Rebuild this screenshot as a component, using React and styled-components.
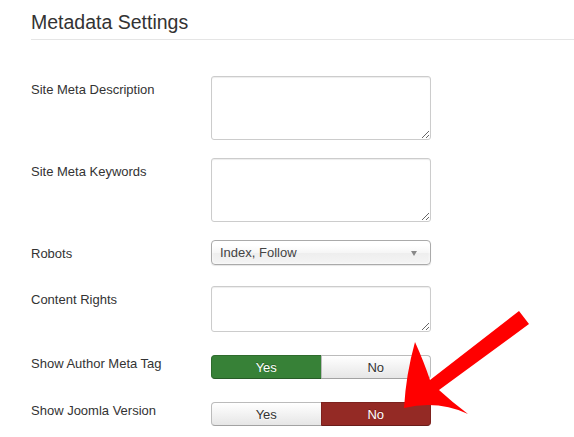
import React from "react";
import styled, { createGlobalStyle } from "styled-components";

const Global = createGlobalStyle`
  html, body { margin: 0; padding: 0; background: #fff; }
  body { font-family: "Liberation Sans", Arial, sans-serif; color: #333; }
  * { box-sizing: border-box; }
`;

const Page = styled.div`
  position: relative;
  width: 574px;
  height: 437px;
  overflow: hidden;
  padding-left: 31px;
`;

const Heading = styled.h2`
  margin: 0 0 5px;
  padding-top: 10px;
  font-size: 19.5px;
  line-height: 24px;
  font-weight: normal;
  color: #333;
`;

const Rule = styled.hr`
  margin: 0 0 36px;
  border: 0;
  border-top: 1px solid #e5e5e5;
  height: 0;
`;

const Row = styled.div`
  display: grid;
  grid-template-columns: 180px 220px;
  align-items: start;
  margin-bottom: ${(p) => p.$gap}px;
`;

const Label = styled.label`
  padding-top: 5px;
  font-size: 13px;
  line-height: 18px;
  color: #333;
`;

const TextArea = styled.textarea`
  display: block;
  width: 220px;
  height: ${(p) => p.$h}px;
  margin: 0;
  border: 1px solid #ccc;
  border-radius: 3px;
  box-shadow: inset 0 1px 1px rgba(0, 0, 0, 0.075);
  resize: vertical;
  font-family: inherit;
  font-size: 13px;
  background: #fff;
`;

const Select = styled.div`
  position: relative;
  display: flex;
  align-items: center;
  width: 220px;
  height: 25px;
  padding-left: 8px;
  border: 1px solid #aaa;
  border-radius: 4px;
  background: linear-gradient(#fff 20%, #f6f6f6 50%, #eee 52%, #f4f4f4 100%);
  box-shadow: inset 0 0 3px #fff, 0 1px 1px rgba(0, 0, 0, 0.1);
  font-size: 13px;
  color: #444;
`;

const Caret = styled.span`
  position: absolute;
  right: 13px;
  top: 10px;
  width: 0;
  height: 0;
  border-left: 3.5px solid transparent;
  border-right: 3.5px solid transparent;
  border-top: 5px solid #888;
`;

const Toggle = styled.div`
  display: flex;
  width: 220px;
  height: 24px;
  margin-top: 5px;
`;

const ToggleBtn = styled.div`
  flex: 1;
  display: flex;
  align-items: center;
  justify-content: center;
  font-size: 13px;
  border: 1px solid ${(p) => (p.$tone === "yes" ? "#2e6b2d" : p.$tone === "no" ? "#7d221e" : "#bbb")};
  border-bottom-color: ${(p) => (p.$tone === "yes" ? "#275b26" : p.$tone === "no" ? "#6a1c19" : "#a2a2a2")};
  background: ${(p) =>
    p.$tone === "yes" ? "#378137" : p.$tone === "no" ? "#942a25" : "linear-gradient(#fff, #e6e6e6)"};
  color: ${(p) => (p.$tone ? "#fff" : "#333")};
  text-shadow: ${(p) => (p.$tone ? "0 -1px 0 rgba(0,0,0,0.25)" : "0 1px 1px rgba(255,255,255,0.75)")};
  &:first-child {
    border-radius: 4px 0 0 4px;
  }
  &:last-child {
    border-radius: 0 4px 4px 0;
    margin-left: -1px;
  }
`;

const Overlay = styled.svg`
  position: absolute;
  left: 0;
  top: 0;
  pointer-events: none;
`;

export default function App() {
  return (
    <>
      <Global />
      <Page>
        <Heading>Metadata Settings</Heading>
        <Rule />
        <Row $gap={18}>
          <Label>Site Meta Description</Label>
          <TextArea $h={64} />
        </Row>
        <Row $gap={18}>
          <Label>Site Meta Keywords</Label>
          <TextArea $h={64} />
        </Row>
        <Row $gap={21}>
          <Label>Robots</Label>
          <Select>
            Index, Follow
            <Caret />
          </Select>
        </Row>
        <Row $gap={18}>
          <Label>Content Rights</Label>
          <TextArea $h={46} />
        </Row>
        <Row $gap={18}>
          <Label>Show Author Meta Tag</Label>
          <Toggle>
            <ToggleBtn $tone="yes">Yes</ToggleBtn>
            <ToggleBtn>No</ToggleBtn>
          </Toggle>
        </Row>
        <Row $gap={0}>
          <Label>Show Joomla Version</Label>
          <Toggle>
            <ToggleBtn>Yes</ToggleBtn>
            <ToggleBtn $tone="no">No</ToggleBtn>
          </Toggle>
        </Row>
        <Overlay width="574" height="437" viewBox="0 0 574 437">
          <path
            d="M 519 311 L 529 324 L 439 390 Q 452 402 468 414 Q 438 400 404 408 Q 406 374 415 342 Q 424 362 430 380 Z"
            fill="#ff0000"
          />
        </Overlay>
      </Page>
    </>
  );
}
